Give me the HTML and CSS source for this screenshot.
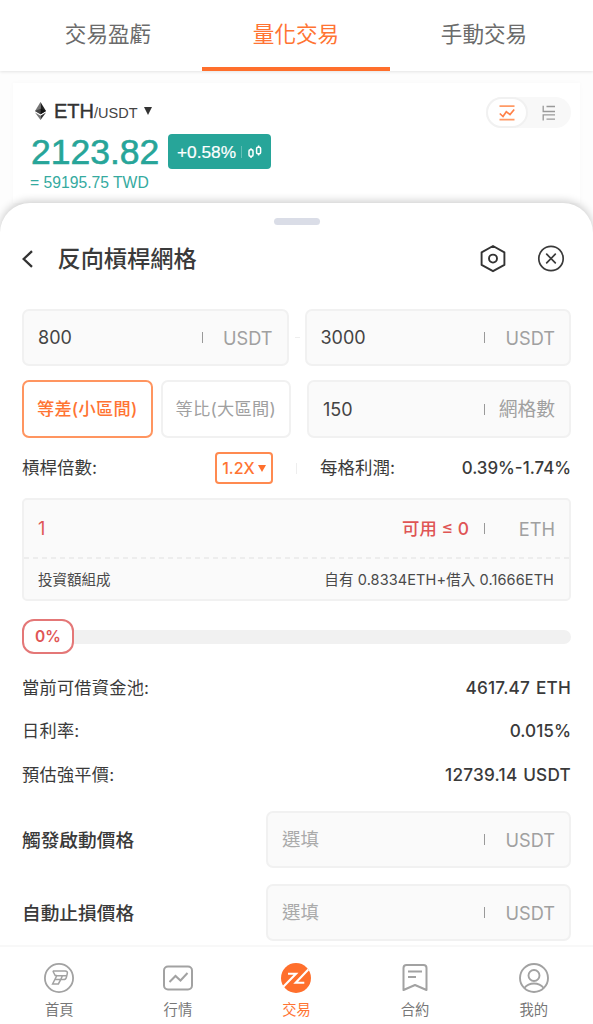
FILE: index.html
```html
<!DOCTYPE html>
<html lang="zh-Hant">
<head>
<meta charset="utf-8">
<title>量化交易</title>
<link rel="stylesheet" href="styles.css">
</head>
<body>
<div class="app">
  <header class="tabs">
    <div class="tab">交易盈虧</div>
    <div class="tab tab-active">量化交易</div>
    <div class="tab">手動交易</div>
  </header>

  <section class="market">
    <div class="quote">
      <div class="pair">
        <svg class="eth" width="13" height="18" viewBox="0 0 13 18"><path d="M6.5 0 1 9l5.500 3.200z" fill="#777"/><path d="M6.500 0 12 9l-5.500 3.200z" fill="#222"/><path d="M1 9l5.500-2.300V12.200z" fill="#444"/><path d="M12 9 6.500 6.700V12.200z" fill="#111"/><path d="M1 10.500 6.500 18v-4.200z" fill="#777"/><path d="M12 10.500 6.500 18v-4.200z" fill="#333"/></svg>
        <span class="base">ETH</span><span class="counter">/USDT</span>
        <svg class="caret" width="8" height="8" viewBox="0 0 8 8"><path d="M0 0h8L4 8z" fill="#333"/></svg>
      </div>
      <div class="price-row">
        <span class="price">2123.82</span>
        <span class="change"><span>+0.58%</span><i class="change-line"></i>
          <svg width="14" height="14" viewBox="0 0 14 14" fill="none" stroke="#fff" stroke-width="1.500"><rect x="1" y="4.800" width="4" height="6.400" rx="1.200"/><path d="M3 3.300V5M3 11v2"/><rect x="8.600" y="2.300" width="4" height="6.400" rx="1.200"/><path d="M10.600 .5v2M10.600 8.500v2"/></svg>
        </span>
      </div>
      <div class="fiat">= 59195.75 TWD</div>
    </div>
    <div class="switch">
      <span class="switch-on"><svg width="16" height="16" viewBox="0 0 16 16" fill="none" stroke="#ff9a66" stroke-width="1.700"><path d="M.5 1.200h15M.5 14.600h15"/><path d="M.8 8.500 4 11.500 7.300 6.800 11 9.500 15.200 4.500" stroke="#ff8148"/></svg></span>
      <span class="switch-off"><svg width="14" height="16" viewBox="0 0 14 16" fill="none" stroke="#999" stroke-width="1.300"><path d="M1.200 .8v5.700h11.800M4.500 1.500h8.500M1.200 15.500V9.800h11.800M4.500 14.200h8.500"/></svg></span>
    </div>
  </section>

  <main class="sheet">
    <div class="handle"></div>
    <div class="sheet-head">
      <svg width="12" height="20" viewBox="0 0 12 20" fill="none" stroke="#333" stroke-width="2.300"><path d="M10 2.200 1.700 10l8.300 7.800"/></svg>
      <h1 class="title">反向槓桿網格</h1>
      <svg width="28" height="28" viewBox="0 0 28 28" fill="none" stroke="#333" stroke-width="1.900" stroke-linejoin="round"><path d="M14 1 25.400 7.300v12.600L14 26.200 2.600 19.900V7.300z"/><circle cx="14" cy="13.600" r="4"/></svg>
      <svg class="close" width="28" height="28" viewBox="0 0 28 28" fill="none" stroke="#3a3a3a" stroke-width="1.700" stroke-linecap="round"><circle cx="14" cy="13.500" r="12.200"/><path d="m9.700 9.200 8.600 8.600m0-8.600-8.600 8.600"/></svg>
    </div>

    <div class="range">
      <div class="field"><span class="value">800</span><i class="bar"></i><span class="unit">USDT</span></div>
      <i class="dash"></i>
      <div class="field"><span class="value">3000</span><i class="bar"></i><span class="unit">USDT</span></div>
    </div>

    <div class="grid-row">
      <div class="mode mode-on">等差(小區間)</div>
      <div class="mode">等比(大區間)</div>
      <div class="field grids"><span class="value">150</span><i class="bar"></i><span class="unit unit-cjk">網格數</span></div>
    </div>

    <div class="lever">
      <span class="label">槓桿倍數:</span>
      <span class="multiple">1.2X<svg width="8" height="7" viewBox="0 0 8 7"><path d="M0 0h8L4 7z" fill="#ff6f2c"/></svg></span>
      <i class="split"></i>
      <span class="label">每格利潤:</span>
      <span class="profit">0.39%-1.74%</span>
    </div>

    <div class="invest">
      <div class="invest-top"><span class="amount">1</span><span class="available">可用 ≤ 0</span><i class="bar"></i><span class="unit">ETH</span></div>
      <svg class="dashes" height="2" width="100%"><path d="M0 1h560" stroke="#ededed" stroke-width="2" stroke-dasharray="5 4"/></svg>
      <div class="invest-bottom"><span>投資額組成</span><span class="makeup">自有 0.8334ETH+借入 0.1666ETH</span></div>
    </div>

    <div class="slider"><span class="knob">0%</span><i class="track"></i></div>

    <dl class="facts">
      <div class="fact"><dt>當前可借資金池:</dt><dd>4617.47 ETH</dd></div>
      <div class="fact"><dt>日利率:</dt><dd class="rate">0.015%</dd></div>
      <div class="fact"><dt>預估強平價:</dt><dd>12739.14 USDT</dd></div>
    </dl>

    <div class="option"><b>觸發啟動價格</b><div class="field"><span class="hint">選填</span><i class="bar"></i><span class="unit">USDT</span></div></div>
    <div class="option"><b>自動止損價格</b><div class="field"><span class="hint">選填</span><i class="bar"></i><span class="unit">USDT</span></div></div>
  </main>

  <nav class="nav">
    <div class="nav-item">
      <svg width="32" height="32" viewBox="0 0 32 32" fill="none" stroke="#a2a2a2" stroke-width="1.800"><circle cx="16" cy="16" r="14.100"/><path d="M9.800 9h12.400c1.800 0 2.500 1 2.100 2.500l-.9 3.800c-.4 1.600-1.300 2.300-3 2.300h-2.700l-2.300 4.300H9.600l4.200-8.200h9.600M9.800 9l2.400 4.500h1.600M12.200 17.500h5.500l2-4.200" stroke-width="1.500"/></svg>
      <span>首頁</span>
    </div>
    <div class="nav-item">
      <svg width="32" height="32" viewBox="0 0 32 32" fill="none" stroke="#a2a2a2" stroke-width="2"><rect x="2" y="4.500" width="28" height="23" rx="4"/><path d="m7.500 20 6-6 5 4.500 7-7.500"/></svg>
      <span>行情</span>
    </div>
    <div class="nav-item nav-active">
      <svg width="32" height="32" viewBox="0 0 32 32" fill="none"><circle cx="16" cy="16" r="15" fill="#ff6f2c"/><path d="M8 11.800h8L3.300 24.800M28.300 7.500 15.700 20.800h8.600" stroke="#fff" stroke-width="2.100"/></svg>
      <span>交易</span>
    </div>
    <div class="nav-item">
      <svg width="32" height="32" viewBox="0 0 32 32" fill="none" stroke="#a2a2a2" stroke-width="2" stroke-linejoin="round"><path d="M4.500 28V6c0-2 .8-3 3-3h17c2.200 0 3 1 3 3v22L16 23z"/><path d="M9 9.500h14M9 15h8"/></svg>
      <span>合約</span>
    </div>
    <div class="nav-item">
      <svg width="32" height="32" viewBox="0 0 32 32" fill="none" stroke="#a2a2a2" stroke-width="1.900"><circle cx="16" cy="16" r="14"/><circle cx="16" cy="13.500" r="5.500"/><path d="M6.300 26c5-6 14.400-6 19.400 0"/></svg>
      <span>我的</span>
    </div>
  </nav>
</div>
</body>
</html>
```
FILE: styles.css
```css
* { box-sizing: border-box; }
body { margin: 0; background: #fdfdfd; font-family: Inter, "Noto Sans CJK TC", sans-serif; color: #3a3a3a; }
svg { display: block; flex: none; }
i { display: block; flex: none; }
.app { width: 593px; height: 1024px; display: flex; flex-direction: column; overflow: hidden; }

.tabs { height: 71px; flex: none; display: flex; padding: 0 15px 0 14px; background: #fff; box-shadow: 0 1px 3px rgba(0,0,0,.1); }
.tab { flex: 1; line-height: 69px; height: 71px; text-align: center; font-size: 21.6px; color: #6b6b6b; }
.tab-active { color: #ff7433; border-bottom: 4px solid #ff6f2c; }

.market { height: 120px; flex: none; margin: 12px 13px 0; padding: 14px 9px 0 17px; display: flex; justify-content: space-between; background: #fff; box-shadow: 0 0 5px rgba(0,0,0,.025); font-family: "Liberation Sans", sans-serif; }
.pair { display: flex; align-items: center; height: 28px; padding-left: 4px; }
.base { font-size: 20px; margin-left: 7px; color: #333; -webkit-text-stroke: .4px #333; }
.counter { font-size: 14.500px; color: #444; padding-top: 3px; }
.caret { margin-left: 6px; }
.price-row { display: flex; align-items: center; gap: 9px; height: 54px; margin-top: -1px; }
.price { font-size: 35.500px; line-height: 54px; color: #27a599; -webkit-text-stroke: .6px #27a599; width: 129px; padding: 1px 0 0 1px; }
.change { height: 35px; width: 103px; padding: 2px 7px 0 9px; border-radius: 4px; background: #27a599; color: #fff; display: flex; align-items: center; font-size: 17.300px; -webkit-text-stroke: .2px #fff; }
.change-line { width: 1px; height: 12px; background: #63bfb6; margin: 0 6px 0 5px; }
.fiat { font-size: 15.700px; line-height: 20px; color: #35aaa0; margin-top: -5px; }
.switch { width: 85px; height: 31px; border-radius: 16px; background: #f8f8f8; display: flex; }
.switch-on, .switch-off { display: flex; align-items: center; justify-content: center; }
.switch-on { width: 42px; border-radius: 16px; background: #fff; border: 2px solid #f1f1f1; }
.switch-off { width: 42px; }

.sheet { height: 742px; flex: none; position: relative; background: #fff; border-radius: 30px 30px 0 0; padding: 15px 22px 0; box-shadow: 0 -2px 9px rgba(0,0,0,.2); }
.handle { width: 46px; height: 7px; border-radius: 4px; background: #dadde7; margin: 0 auto; }
.sheet-head { display: flex; align-items: center; height: 28px; margin-top: 20px; padding-right: 6px; }
.title { margin: 0; font-size: 23.200px; line-height: 28px; font-weight: 500; flex: 1; padding-left: 23.500px; }
.close { margin-left: 30px; }

.field { height: 57px; display: flex; align-items: center; padding: 0 14px; border: 2px solid #f1f1f1; border-radius: 7px; background: #fafafa; }
.value { font-size: 18px; color: #444; }
.bar { width: 1px; height: 11px; background: #999; margin-left: auto; }
.unit { width: 70px; text-align: right; font-size: 18.200px; color: #a0a0a0; }
.unit-cjk { font-size: 18.800px; padding-bottom: 3px; }
.range { display: flex; align-items: center; margin-top: 36px; }
.range .field { width: 267px; }
.dash { width: 5px; height: 1px; background: #eee; margin: 0 5px 0 6px; }
.grid-row { display: flex; margin-top: 14px; gap: 8px; }
.mode { width: 130.500px; height: 58px; line-height: 54px; border: 2px solid #f1f1f1; border-radius: 7px; text-align: center; font-size: 17.200px; color: #a0a0a0; letter-spacing: .3px; }
.mode-on { border-color: #ff9560; color: #ff7433; font-weight: 500; }
.grids { height: 58px; flex: 1; margin-left: 8px; }

.lever { display: flex; align-items: center; height: 32px; margin-top: 14px; font-size: 17.500px; }
.label { white-space: nowrap; padding-bottom: 3px; }
.multiple { width: 58px; height: 32px; margin-left: auto; border: 2px solid #ff8a50; border-radius: 4px; color: #ff7433; font-size: 16px; font-weight: 500; display: flex; align-items: center; justify-content: center; gap: 3px; }
.split { width: 1px; height: 11px; background: #eee; margin: 0 23px; }
.profit { width: 176px; text-align: right; font-size: 16.900px; font-weight: 500; }

.invest { margin-top: 14px; height: 103px; border: 2px solid #f1f1f1; border-radius: 5px; background: #fafafa; }
.invest-top { height: 57px; display: flex; align-items: center; padding: 0 14px; }
.amount { font-size: 18px; color: #df5555; }
.available { margin-left: auto; font-size: 17.400px; font-weight: 500; color: #df5555; padding-bottom: 2px; }
.invest-top .bar { margin-left: 15px; }
.invest-bottom { height: 38px; display: flex; align-items: center; justify-content: space-between; padding: 0 15px 0 14px; font-size: 14.500px; color: #4a4a4a; }
.makeup { letter-spacing: .11px; }

.slider { display: flex; align-items: center; height: 35px; margin-top: 18px; }
.knob { width: 52px; height: 35px; border: 2px solid #e47777; border-radius: 12px; line-height: 32px; text-align: center; color: #df5555; font-size: 15.500px; font-weight: 600; background: #fff; }
.track { flex: 1; height: 14px; background: #f1f1f1; border-radius: 0 7px 7px 0; }
.facts { margin: 12px 0 0; }
.fact { display: flex; align-items: center; justify-content: space-between; height: 43.500px; font-size: 17.200px; }
.fact dt { padding-bottom: 3px; letter-spacing: .25px; }
.fact dd { margin: 0; font-weight: 500; word-spacing: 1px; letter-spacing: .22px; padding-bottom: 1px; }
.fact .rate { letter-spacing: 0; }
.option { display: flex; align-items: center; justify-content: space-between; height: 57px; margin-top: 16px; }
.option b { font-size: 18.700px; font-weight: 500; padding-bottom: 3px; }
.option .field { width: 305px; }
.hint { font-size: 18.500px; color: #aaa; padding-bottom: 3px; }
.facts + .option { margin-top: 14.500px; }

.nav { position: relative; height: 79px; flex: none; background: #fff; border-top: 2px solid #f8f8f8; display: flex; }
.nav-item { flex: 1; display: flex; flex-direction: column; align-items: center; padding-top: 15px; gap: 6px; color: #777; font-size: 14.300px; line-height: 20px; }
.nav-active { color: #ff7433; }
```
